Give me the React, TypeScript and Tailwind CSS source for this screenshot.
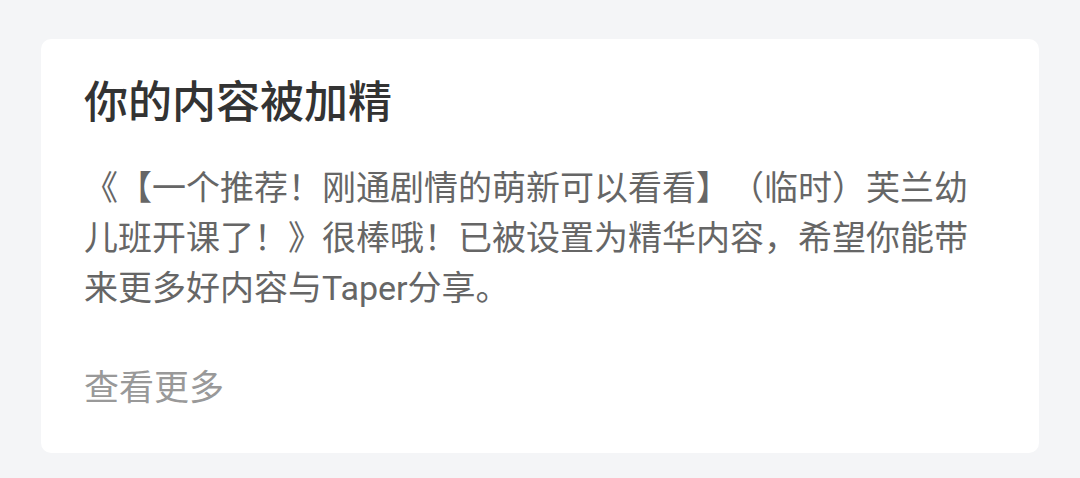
export default function App() {
  return (
    <div
      className="min-h-screen bg-[#f4f5f7] px-[41px] pt-[39px] [text-spacing-trim:space-all]"
      style={{ fontFamily: 'Roboto, "Noto Sans CJK SC", sans-serif' }}
    >
      <div className="h-[414px] rounded-[10px] bg-white px-[43px] pt-[34px]">
        <h1 className="text-[44px] font-medium leading-[60px] text-[#333333]">
          你的内容被加精
        </h1>
        <p className="mt-[30px] text-[34px] leading-[50px] text-[#666666]">
          《【一个推荐！刚通剧情的萌新可以看看】（临时）芙兰幼儿班开课了！》很棒哦！已被设置为精华内容，希望你能带来更多好内容与Taper分享。
        </p>
        <button className="mt-[51px] block text-[35px] leading-[50px] text-[#999999]">
          查看更多
        </button>
      </div>
    </div>
  );
}
